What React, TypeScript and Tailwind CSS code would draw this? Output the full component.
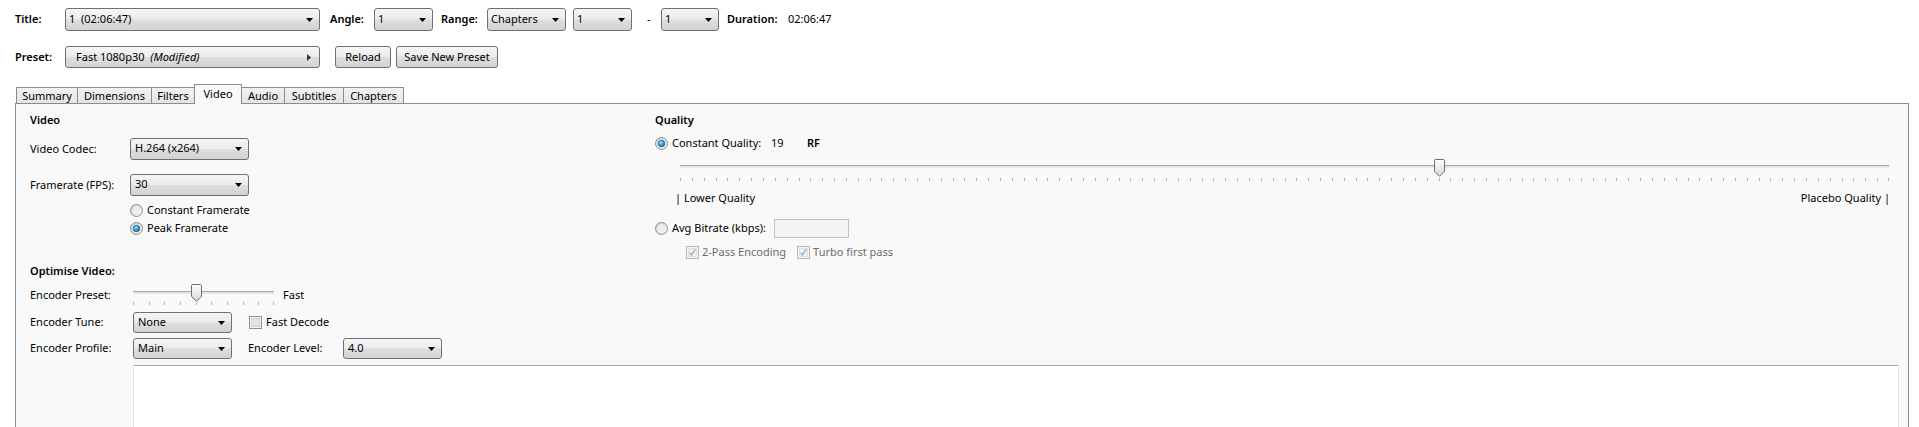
import React, { useId } from 'react';

const FONT = "font-['Noto_Sans','Open_Sans',sans-serif]";

// win7-ish button / combo face
const FACE =
  'border border-[#707070] rounded-[3px] bg-[linear-gradient(#f6f6f6_0%,#ebebeb_48%,#dedede_52%,#d3d3d3_100%)]';

const DownArrow = () => (
  <svg width="7" height="4" viewBox="0 0 7 4" className="shrink-0">
    <path d="M0 0 H7 L3.5 4 Z" fill="#000" />
  </svg>
);

const RightArrow = () => (
  <svg width="4" height="7" viewBox="0 0 4 7" className="shrink-0">
    <path d="M0 0 V7 L4 3.5 Z" fill="#333" />
  </svg>
);

interface ComboProps {
  className: string;
  children: React.ReactNode;
  pad?: string;
}

const Combo: React.FC<ComboProps> = ({ className, children, pad = 'pl-[4px]' }) => (
  <div className={`${FACE} ${className} ${pad} pr-[6px] flex items-center justify-between shrink-0`}>
    <span className="whitespace-pre leading-none pb-[3px]">{children}</span>
    <DownArrow />
  </div>
);

const Btn: React.FC<{ className: string; children: React.ReactNode }> = ({ className, children }) => (
  <div className={`${FACE} ${className} h-[22px] flex items-center justify-center shrink-0`}>
    <span className="leading-none pb-[1px]">{children}</span>
  </div>
);

const Radio: React.FC<{ checked?: boolean }> = ({ checked }) => {
  const id = useId().replace(/:/g, '');
  return (
    <svg width="13" height="13" viewBox="0 0 13 13" className="shrink-0">
      <defs>
        <linearGradient id={`rg${id}`} x1="0" y1="0" x2="1" y2="1">
          <stop offset="0" stopColor="#cbcbcb" />
          <stop offset="1" stopColor="#f6f6f6" />
        </linearGradient>
        <radialGradient id={`rb${id}`} cx="0.4" cy="0.35" r="0.7">
          <stop offset="0" stopColor="#8ee0ff" />
          <stop offset="0.6" stopColor="#2d9ad3" />
          <stop offset="1" stopColor="#1b5f8c" />
        </radialGradient>
      </defs>
      <circle cx="6.5" cy="6.5" r="6" fill={`url(#rg${id})`} stroke="#8e8f8f" />
      <circle cx="6.5" cy="6.5" r="4.3" fill="#f4f4f4" opacity="0.7" />
      {checked && <circle cx="6.5" cy="6.5" r="3.3" fill={`url(#rb${id})`} stroke="#1f5a83" strokeWidth="0.7" />}
    </svg>
  );
};

const Check: React.FC<{ checked?: boolean; disabled?: boolean }> = ({ checked, disabled }) => (
  <svg width="13" height="13" viewBox="0 0 13 13" className="shrink-0">
    <rect x="0.5" y="0.5" width="12" height="12" fill="#f4f4f4" stroke={disabled ? '#b8b8b8' : '#8e8f8f'} />
    <rect x="2.5" y="2.5" width="8" height="8" fill={disabled ? '#f1f1f1' : '#e3e3e3'} stroke={disabled ? '#e0e0e0' : '#d0d0d0'} />
    {checked && <path d="M3.5 6.8 L5.5 9 L9.3 3.2" fill="none" stroke={disabled ? '#9fb0c8' : '#4a5f97'} strokeWidth="1.4" />}
  </svg>
);

const Thumb = () => {
  const id = useId().replace(/:/g, '');
  return (
    <svg width="11" height="18" viewBox="0 0 11 18">
      <defs>
        <linearGradient id={`tg${id}`} x1="0" y1="0" x2="0" y2="1">
          <stop offset="0" stopColor="#ffffff" />
          <stop offset="1" stopColor="#d6d6d6" />
        </linearGradient>
      </defs>
      <path d="M1.8 0.5 H9.2 Q10.5 0.5 10.5 1.8 V12.3 L5.5 17.3 L0.5 12.3 V1.8 Q0.5 0.5 1.8 0.5 Z" fill={`url(#tg${id})`} stroke="#6f6f6f" />
    </svg>
  );
};

// a trackbar with ticks underneath; positions computed from tick count
const Slider: React.FC<{ ticks: number; value: number; className: string; trackTop: string; tickTop: string; thumbTop: string }> = ({
  ticks,
  value,
  className,
  trackTop,
  tickTop,
  thumbTop,
}) => (
  <div className={`relative ${className}`}>
    <div className={`absolute left-0 right-0 ${trackTop} h-[3px] border-t border-[#a5a5a5] bg-[#e4e6e8]`} />
    {Array.from({ length: ticks }).map((_, i) => (
      <div
        key={i}
        className={`absolute ${tickTop} w-px h-[3px] bg-[#b4b4b4]`}
        style={{ left: `calc(${(i / (ticks - 1)) * 100}% - ${i === ticks - 1 ? 1 : 0}px)` }}
      />
    ))}
    <div className={`absolute ${thumbTop}`} style={{ left: `calc(${(value / (ticks - 1)) * 100}% - 5px)` }}>
      <Thumb />
    </div>
  </div>
);

const tabs = [
  { name: 'Summary', w: 'w-[62px]' },
  { name: 'Dimensions', w: 'w-[75px]' },
  { name: 'Filters', w: 'w-[44px]' },
  { name: 'Video', w: 'w-[48px]', active: true },
  { name: 'Audio', w: 'w-[44px]' },
  { name: 'Subtitles', w: 'w-[60px]' },
  { name: 'Chapters', w: 'w-[61px]' },
];

export default function App() {
  return (
    <div className={`h-[427px] w-[1919px] overflow-hidden bg-white text-[11px] text-black ${FONT}`}>
      {/* source row */}
      <div className="flex items-center pl-[15px] pt-[8px]">
        <span className="w-[50px] font-semibold">Title:</span>
        <Combo className="w-[255px] h-[23px]" pad="pl-[3px]">1  (02:06:47)</Combo>
        <span className="ml-[10px] w-[44px] font-semibold">Angle:</span>
        <Combo className="w-[59px] h-[23px]" pad="pl-[3px]">1</Combo>
        <span className="ml-[8px] w-[46px] font-semibold">Range:</span>
        <Combo className="w-[79px] h-[23px]" pad="pl-[3px]">Chapters</Combo>
        <Combo className="ml-[7px] w-[59px] h-[23px]" pad="pl-[3px]">1</Combo>
        <span className="ml-[15px] w-[14px]">-</span>
        <Combo className="w-[58px] h-[23px]" pad="pl-[3px]">1</Combo>
        <span className="ml-[8px] w-[61px] font-semibold">Duration:</span>
        <span>02:06:47</span>
      </div>

      {/* preset row */}
      <div className="flex items-center pl-[15px] mt-[15px]">
        <span className="w-[50px] font-semibold">Preset:</span>
        <div className={`${FACE} w-[255px] h-[22px] pl-[10px] pr-[8px] flex items-center justify-between`}>
          <span className="whitespace-pre leading-none pb-[1px]">
            Fast 1080p30  <i>(Modified)</i>
          </span>
          <RightArrow />
        </div>
        <Btn className="ml-[15px] w-[56px]">Reload</Btn>
        <Btn className="ml-[5px] w-[102px]">Save New Preset</Btn>
      </div>

      {/* tabs */}
      <div className="mt-[16px] flex items-end h-[19px] pl-[16px]">
        {tabs.map((t, i) =>
          t.active ? (
            <div
              key={t.name}
              className={`${t.w} -ml-px h-[20px] -mb-px relative z-10 border border-b-0 border-[#898c95] bg-[#f9f9f9] flex items-center justify-center`}
            >
              <span className="pb-[1px]">{t.name}</span>
            </div>
          ) : (
            <div
              key={t.name}
              className={`${t.w} ${i === 0 ? '' : '-ml-px'} h-[16px] border border-b-0 border-[#898c95] bg-[linear-gradient(#f2f2f2,#e4e4e4)] flex items-center justify-center`}
            >
              <span className="leading-none pb-[1px]">{t.name}</span>
            </div>
          ),
        )}
      </div>

      {/* tab page */}
      <div className="ml-[15px] mr-[10px] h-[400px] border border-[#898c95] bg-[#f9f9f9] pl-[14px] pt-[8px]">
        <div className="flex">
          {/* left: video settings */}
          <div className="w-[625px] shrink-0 flex flex-col">
            <div className="h-[16px] leading-[16px] font-semibold">Video</div>

            <div className="mt-[10px] h-[22px] flex items-center">
              <span className="w-[100px]">Video Codec:</span>
              <Combo className="w-[119px] h-[22px]">H.264 (x264)</Combo>
            </div>

            <div className="mt-[14px] h-[22px] flex items-center">
              <span className="w-[100px]">Framerate (FPS):</span>
              <Combo className="w-[119px] h-[22px]">30</Combo>
            </div>

            <div className="mt-[6px] h-[16px] pl-[100px] flex items-center gap-[4px]">
              <Radio />
              <span>Constant Framerate</span>
            </div>
            <div className="mt-[2px] h-[16px] pl-[100px] flex items-center gap-[4px]">
              <Radio checked />
              <span>Peak Framerate</span>
            </div>

            <div className="mt-[27px] h-[16px] leading-[16px] font-semibold">Optimise Video:</div>

            <div className="mt-[5px] h-[22px] flex items-center">
              <span className="w-[103px]">Encoder Preset:</span>
              <Slider ticks={10} value={4} className="w-[141px] h-[22px]" trackTop="top-[7px]" tickTop="top-[18px]" thumbTop="top-0" />
              <span className="ml-[9px]">Fast</span>
            </div>

            <div className="mt-[6px] h-[21px] flex items-center">
              <span className="w-[103px]">Encoder Tune:</span>
              <Combo className="w-[99px] h-[21px]">None</Combo>
              <span className="ml-[17px]">
                <Check />
              </span>
              <span className="ml-[4px]">Fast Decode</span>
            </div>

            <div className="mt-[5px] h-[21px] flex items-center">
              <span className="w-[103px]">Encoder Profile:</span>
              <Combo className="w-[99px] h-[21px]">Main</Combo>
              <span className="ml-[16px] w-[95px]">Encoder Level:</span>
              <Combo className="w-[99px] h-[21px]">4.0</Combo>
            </div>
          </div>

          {/* right: quality */}
          <div className="flex-1 flex flex-col pr-[18px]">
            <div className="h-[16px] leading-[16px] font-semibold">Quality</div>

            <div className="mt-[7px] h-[16px] flex items-center">
              <Radio checked />
              <span className="ml-[4px] w-[99px]">Constant Quality:</span>
              <span className="w-[36px]">19</span>
              <span className="font-semibold">RF</span>
            </div>

            <div className="mt-[7px] pl-[25px] pr-[1px]">
              <Slider ticks={103} value={64} className="w-full h-[26px]" trackTop="top-[7px]" tickTop="top-[20px]" thumbTop="top-[1px]" />
            </div>

            <div className="mt-[6px] h-[16px] pl-[20px] flex items-center justify-between">
              <span>| Lower Quality</span>
              <span>Placebo Quality |</span>
            </div>

            <div className="mt-[12px] h-[20px] flex items-center">
              <Radio />
              <span className="ml-[4px] w-[102px]">Avg Bitrate (kbps):</span>
              <div className="w-[75px] h-[19px] border border-[#c3c3c3] bg-[#f4f4f4]" />
            </div>

            <div className="mt-[6px] h-[16px] pl-[31px] flex items-center text-[#6d6d6d]">
              <Check checked disabled />
              <span className="ml-[3px]">2-Pass Encoding</span>
              <span className="ml-[11px]">
                <Check checked disabled />
              </span>
              <span className="ml-[3px]">Turbo first pass</span>
            </div>
          </div>
        </div>

        {/* advanced options text box */}
        <div className="mt-[6px] ml-[103px] mr-[9px] h-[200px] bg-white border border-[#e2e3ea] border-t-[#a8a8a8]" />
      </div>
    </div>
  );
}
